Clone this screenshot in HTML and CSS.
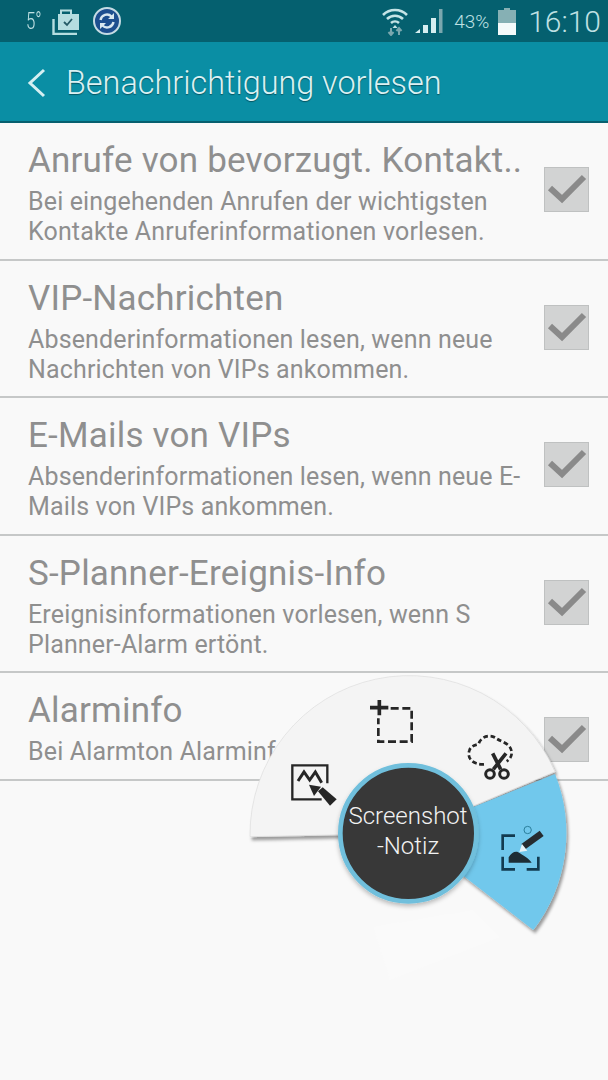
FILE: index.html
```html
<!DOCTYPE html>
<html lang="de">
<head>
  <meta charset="UTF-8">
  <title>Benachrichtigung vorlesen</title>
  <link rel="stylesheet" href="styles.css">
</head>
<body>
  <div class="phone">

    <!-- Statusleiste -->
    <div class="status">
      <span class="temp">5°</span>
      <svg class="ic-bag" width="28" height="28" viewBox="0 0 28 28">
        <path d="M9 7V3.500H19V7" fill="none" stroke="#b5dde0" stroke-width="2"/>
        <rect x="6" y="7" width="21" height="16" fill="#b5dde0"/>
        <path d="M12 15l3 3 5-6" fill="none" stroke="#245a66" stroke-width="1.800"/>
        <path d="M1.500 12V27H25" fill="none" stroke="#b5dde0" stroke-width="2.400"/>
      </svg>
      <svg class="ic-sync" width="28" height="28" viewBox="0 0 28 28">
        <circle cx="14" cy="14" r="13" fill="#1d4f8f" stroke="#c5dbe4" stroke-width="2"/>
        <path d="M7.500 13a6.500 6.500 0 0 1 11-3.500M20.500 15a6.500 6.500 0 0 1-11 3.500" fill="none" stroke="#d8e8f0" stroke-width="2.400"/>
        <path d="M21 6v6h-6zM7 22v-6h6z" fill="#d8e8f0"/>
      </svg>
      <svg class="ic-wifi" width="28" height="30" viewBox="0 0 28 30">
        <path d="M2 9a17 17 0 0 1 24 0M6 13a11.500 11.500 0 0 1 16 0M10 17a6 6 0 0 1 8 0" fill="none" stroke="#c5e4e6" stroke-width="2.600"/>
        <path d="M14 19l-2.500 3h5z" fill="#c5e4e6"/>
        <path d="M10 22v7M7.500 26l2.500 3 2.500-3" fill="none" stroke="#7aa7ae" stroke-width="2"/>
        <path d="M18 29v-7M15.500 25l2.500-3 2.500 3" fill="none" stroke="#7aa7ae" stroke-width="2"/>
      </svg>
      <svg class="ic-signal" width="28" height="26" viewBox="0 0 28 26">
        <path d="M0 25l5-4v4z" fill="#d5eef0"/>
        <path d="M8 25V17h5v8z" fill="#d5eef0"/>
        <path d="M16 25V10h5v15z" fill="#d5eef0"/>
        <path d="M24 25V1h3.500v24z" fill="#7aa7ae"/>
      </svg>
      <span class="batt-text">43%</span>
      <svg class="ic-batt" width="18" height="27" viewBox="0 0 18 27">
        <path d="M6 0h6v2h6v25H0V2h6z" fill="#86b0b4"/>
        <rect y="15" width="18" height="12" fill="#f4fafa"/>
      </svg>
      <span class="clock">16:10</span>
    </div>

    <!-- Kopfzeile -->
    <div class="header">
      <svg class="back" width="20" height="30" viewBox="0 0 20 30">
        <path d="M17 2L3 15l14 13" fill="none" stroke="#d5eff2" stroke-width="3"/>
      </svg>
      <h1>Benachrichtigung vorlesen</h1>
    </div>

    <!-- Liste -->
    <div class="list">
      <div class="row">
        <div class="row-text">
          <h2>Anrufe von bevorzugt. Kontakt..</h2>
          <p>Bei eingehenden Anrufen der wichtigsten Kontakte Anruferinformationen vorlesen.</p>
        </div>
        <span class="check"><svg width="44" height="44" viewBox="0 0 44 44"><path d="M5 20l12 11L39 9" fill="none" stroke="#8a8a8a" stroke-width="6"/></svg></span>
      </div>
      <div class="row">
        <div class="row-text">
          <h2>VIP-Nachrichten</h2>
          <p>Absenderinformationen lesen, wenn neue Nachrichten von VIPs ankommen.</p>
        </div>
        <span class="check"><svg width="44" height="44" viewBox="0 0 44 44"><path d="M5 20l12 11L39 9" fill="none" stroke="#8a8a8a" stroke-width="6"/></svg></span>
      </div>
      <div class="row">
        <div class="row-text">
          <h2>E-Mails von VIPs</h2>
          <p>Absenderinformationen lesen, wenn neue E-Mails von VIPs ankommen.</p>
        </div>
        <span class="check"><svg width="44" height="44" viewBox="0 0 44 44"><path d="M5 20l12 11L39 9" fill="none" stroke="#8a8a8a" stroke-width="6"/></svg></span>
      </div>
      <div class="row">
        <div class="row-text">
          <h2>S-Planner-Ereignis-Info</h2>
          <p>Ereignisinformationen vorlesen, wenn S Planner-Alarm ertönt.</p>
        </div>
        <span class="check"><svg width="44" height="44" viewBox="0 0 44 44"><path d="M5 20l12 11L39 9" fill="none" stroke="#8a8a8a" stroke-width="6"/></svg></span>
      </div>
      <div class="row row-short">
        <div class="row-text">
          <h2>Alarminfo</h2>
          <p>Bei Alarmton Alarminformationen vorlesen.</p>
        </div>
        <span class="check"><svg width="44" height="44" viewBox="0 0 44 44"><path d="M5 20l12 11L39 9" fill="none" stroke="#8a8a8a" stroke-width="6"/></svg></span>
      </div>
    </div>

    <!-- Air-Command-Menue, Koordinaten im Massstab 3:1 -->
    <div class="wheel">
      <svg width="340" height="320" viewBox="0 0 1020 960">
        <defs>
          <filter id="shadow" x="-10%" y="-10%" width="120%" height="120%">
            <feDropShadow dx="6" dy="10" stdDeviation="4" flood-color="#000" flood-opacity="0.38"/>
          </filter>
          <filter id="soft" x="-10%" y="-10%" width="120%" height="120%">
            <feDropShadow dx="0" dy="8" stdDeviation="6" flood-color="#000" flood-opacity="0.25"/>
          </filter>
        </defs>
        <path d="M399 771L699 720L780 801L450 930Z" fill="#fafafa"/>
        <path d="M30 500A477 477 0 0 1 945 305L505 490Z" fill="#f4f4f4" stroke="#dcdcdc" stroke-width="2" filter="url(#shadow)"/>
        <path d="M945 312A477 477 0 0 1 880 780L505 490Z" fill="#71c8ec" filter="url(#shadow)"/>
        <circle cx="505" cy="490" r="204" fill="#373737" stroke="#6fbfdc" stroke-width="14" filter="url(#soft)"/>

        <!-- Zuschneiden -->
        <path d="M390 113H445M418 90V136" fill="none" stroke="#262626" stroke-width="11"/>
        <path d="M452 115H515V215H415V145" fill="none" stroke="#262626" stroke-width="8" stroke-dasharray="24 11"/>

        <!-- Wolke mit Schere -->
        <path d="M732 283C700 285 680 265 688 242C692 228 704 226 716 222C722 200 750 190 770 206C785 216 812 220 815 246C816 258 810 268 800 274" fill="none" stroke="#262626" stroke-width="8" stroke-dasharray="14 8"/>
        <path d="M758 250L782 298M798 250L760 298" fill="none" stroke="#262626" stroke-width="11"/>
        <circle cx="750" cy="312" r="13" fill="none" stroke="#262626" stroke-width="9"/>
        <circle cx="792" cy="312" r="13" fill="none" stroke="#262626" stroke-width="9"/>

        <!-- Bild und Stift -->
        <path d="M262 340V286H157V388H245" fill="none" stroke="#262626" stroke-width="7"/>
        <path d="M174 333L192 306L209 330L226 306L245 338" fill="none" stroke="#262626" stroke-width="9"/>
        <path d="M207 344L243 350L222 378Z" fill="#262626"/>
        <path d="M234 364L270 407L290 388L248 352Z" fill="#262626"/>

        <!-- Screenshot-Notiz -->
        <path d="M825 497H788V540M788 560V598H825M860 598H895V560" fill="none" stroke="#123b50" stroke-width="8"/>
        <path d="M806 578V562C815 545 830 540 840 550C855 560 865 565 875 578Z" fill="#1d2d35"/>
        <path d="M850 530L905 490" fill="none" stroke="#262c30" stroke-width="20"/>
        <path d="M838 546L846 522L862 542Z" fill="#e8f4f8"/>
        <circle cx="863" cy="480" r="11" fill="none" stroke="#2b7f9c" stroke-width="3"/>
      </svg>
      <div class="wheel-label">Screenshot<br>-Notiz</div>
    </div>

  </div>
</body>
</html>
```

FILE: styles.css
```css
html, body {
  margin: 0;
  padding: 0;
  height: 100%;
  background: #f9f9f9;
  font-family: Roboto, "Liberation Sans", sans-serif;
  overflow: hidden;
}

.phone {
  position: relative;
  width: 608px;
  height: 1080px;
}

/* Statusleiste */
.status {
  display: flex;
  align-items: center;
  height: 42px;
  padding: 0 7px 0 26px;
  background: #05606f;
  color: #bfe0e3;
  box-sizing: border-box;
}

.temp {
  width: 26px;
  font-size: 24px;
  font-weight: 300;
  transform: scaleX(0.7);
  transform-origin: left center;
}

.ic-bag {
  margin-right: 13px;
}

.ic-sync {
  margin-right: auto;
}

.ic-wifi {
  margin-right: 6px;
}

.ic-signal {
  margin-right: 11px;
}

.batt-text {
  width: 44px;
  font-size: 19px;
  font-weight: 300;
}

.ic-batt {
  margin-right: 12px;
}

.clock {
  font-size: 30px;
  font-weight: 300;
}

/* Kopfzeile */
.header {
  display: flex;
  align-items: center;
  height: 77px;
  padding: 2px 0 0 27px;
  background: #0a8ea4;
  border-bottom: 2px solid #07606f;
}

.back {
  margin-right: 19px;
}

h1 {
  margin: 0;
  font-size: 32.4px;
  font-weight: 300;
  color: #dbf1f3;
  text-shadow: 0 1px 1px rgba(0, 0, 0, 0.4);
}

/* Liste */
.row {
  display: flex;
  justify-content: space-between;
  height: 137.5px;
  padding: 18px 19px 0 28px;
  border-bottom: 2px solid #c6c8c8;
  box-sizing: border-box;
}

.row-short {
  height: 108px;
}

.row-text {
  width: 500px;
}

h2 {
  margin: 0 0 6px;
  font-size: 35px;
  line-height: 40px;
  font-weight: 400;
  letter-spacing: 0.2px;
  color: #8f8f8f;
  white-space: nowrap;
}

.row p {
  margin: 0;
  font-size: 25px;
  line-height: 30px;
  letter-spacing: 0.15px;
  color: #8f8f8f;
}

.row-short p {
  white-space: nowrap;
}

.check {
  flex: none;
  width: 45px;
  height: 45px;
  margin-top: 26px;
  background: #d2d3d3;
  border: 1px solid #bfc1c1;
  box-sizing: border-box;
}

/* Air-Command-Menue */
.wheel {
  position: absolute;
  left: 240px;
  top: 670px;
  width: 340px;
  height: 320px;
}

.wheel-label {
  position: absolute;
  left: 98px;
  top: 131px;
  width: 140px;
  font-size: 24px;
  line-height: 30px;
  font-weight: 300;
  text-align: center;
  color: #f2f2f2;
}
```
